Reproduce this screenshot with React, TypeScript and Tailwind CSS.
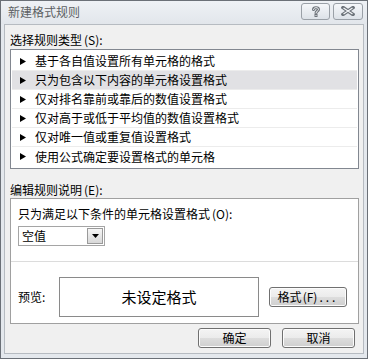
import React from "react";

const btn =
  "flex items-center justify-center rounded-[3px] border border-[#707070] bg-[linear-gradient(to_bottom,#f4f4f4_0%,#ebebeb_50%,#dddddd_50%,#cfcfcf_100%)] shadow-[inset_0_0_0_1px_#fcfcfc] text-[12px] leading-[16px] text-black";

const rules = [
  "基于各自值设置所有单元格的格式",
  "只为包含以下内容的单元格设置格式",
  "仅对排名靠前或靠后的数值设置格式",
  "仅对高于或低于平均值的数值设置格式",
  "仅对唯一值或重复值设置格式",
  "使用公式确定要设置格式的单元格",
];

function Tri() {
  return (
    <svg width="6" height="7" viewBox="0 0 6 7" className="shrink-0">
      <polygon points="0,0 6,3.5 0,7" fill="#000" />
    </svg>
  );
}

export default function App() {
  return (
    <div className="w-[368px] h-[359px] border border-[#6b7077] bg-[#e4e8ed] font-['Noto_Sans_CJK_SC',sans-serif] flex flex-col">
      {/* title bar */}
      <div className="h-[23px] flex items-center pl-[7px] pr-[4px] bg-[linear-gradient(to_bottom,#eef1f5,#e2e6eb)]">
        <span className="text-[12px] leading-[16px] text-[#5c5f63] mt-[-1px]">新建格式规则</span>
        <div className="ml-auto flex gap-[3px] mt-[-3px]">
          <div className="w-[29px] h-[17px] rounded-[3px] border border-[#9aa0a7] bg-[linear-gradient(to_bottom,#f5f7fa,#dde2e8)] flex items-center justify-center">
            <svg width="10" height="11" viewBox="0 0 10 11">
              <path d="M2.5 3.5 C2.5 1 7.5 1 7.5 3.5 C7.5 5 5 5 5 7" fill="none" stroke="#6d737a" strokeWidth="3" strokeLinecap="round" />
              <path d="M2.5 3.5 C2.5 1 7.5 1 7.5 3.5 C7.5 5 5 5 5 7" fill="none" stroke="#f4f6f8" strokeWidth="1" strokeLinecap="round" />
              <rect x="3.5" y="8" width="3" height="3" fill="#6d737a" />
              <rect x="4.5" y="9" width="1" height="1" fill="#f4f6f8" />
            </svg>
          </div>
          <div className="w-[30px] h-[17px] rounded-[3px] border border-[#9aa0a7] bg-[linear-gradient(to_bottom,#f5f7fa,#dde2e8)] flex items-center justify-center">
            <svg width="14" height="10" viewBox="0 0 14 10">
              <path d="M2 1.5 L12 8.5 M12 1.5 L2 8.5" fill="none" stroke="#6d737a" strokeWidth="3.4" strokeLinecap="square" />
              <path d="M2.5 2 L11.5 8 M11.5 2 L2.5 8" fill="none" stroke="#f4f6f8" strokeWidth="1.2" />
            </svg>
          </div>
        </div>
      </div>

      {/* client area */}
      <div className="ml-[3px] w-[360px] h-[330px] border border-[#b6bbc1] bg-[#f0f0f0] flex flex-col pl-[5px] pt-[7px]">
        <div className="h-[16px] text-[12px] leading-[16px] text-black">
          选择规则类型<span className="ml-[2px]">(S):</span>
        </div>

        <div className="mt-[1px] w-[349px] h-[120px] border border-[#828790] bg-white px-[1px] py-[2px] flex flex-col">
          {rules.map((r, i) => (
            <div
              key={r}
              className={
                "h-[19px] flex items-center pl-[8px] gap-[9px] text-[12px] leading-[16px] text-black " +
                (i < rules.length - 1 ? "border-b border-[#ececec] " : "") +
                (i === 1 ? "bg-[#e1e1e4]" : "")
              }
            >
              <Tri />
              <span>{r}</span>
            </div>
          ))}
        </div>

        <div className="mt-[13px] h-[16px] text-[12px] leading-[16px] text-black">
          编辑规则说明<span className="ml-[2px]">(E):</span>
        </div>

        <div className="w-[349px] h-[126px] border border-[#a0a0a0] bg-white flex flex-col">
          <div className="pl-[7px] pt-[7px]">
            <div className="h-[16px] text-[12px] leading-[16px] text-black">
              只为满足以下条件的单元格设置格式<span className="ml-[2px]">(O):</span>
            </div>
            <div className="mt-[4px] w-[87px] h-[20px] border border-[#a5a5a5] bg-white flex items-center pl-[3px] pr-[1px]">
              <span className="text-[12px] leading-[16px] text-black">空值</span>
              <div className="ml-auto w-[16px] h-[16px] border border-[#9a9a9a] bg-[linear-gradient(to_bottom,#f6f6f6,#d8d8d8)] flex items-center justify-center">
                <svg width="7" height="4" viewBox="0 0 7 4">
                  <polygon points="0,0 7,0 3.5,4" fill="#000" />
                </svg>
              </div>
            </div>
          </div>
          <div className="mt-[15px] h-[1px] bg-[#dcdcdc]" />
          <div className="pt-[15px] pl-[7px] flex items-center">
            <div className="w-[41px] text-[12px] leading-[16px] text-black">预览:</div>
            <div className="w-[200px] h-[40px] border border-[#8a8a8a] bg-white flex items-center justify-center text-[15px] leading-[20px] text-black">
              未设定格式
            </div>
            <div className={"ml-[10px] w-[78px] h-[20px] " + btn}>
              格式<span className="ml-[1px]">(F)</span>
              <span className="ml-[2px] tracking-[3px]">...</span>
            </div>
          </div>
        </div>

        <div className="mt-[4px] flex gap-[11px] pl-[188px]">
          <div className={"w-[73px] h-[20px] " + btn}>确定</div>
          <div className={"w-[73px] h-[20px] " + btn}>取消</div>
        </div>
      </div>
    </div>
  );
}
